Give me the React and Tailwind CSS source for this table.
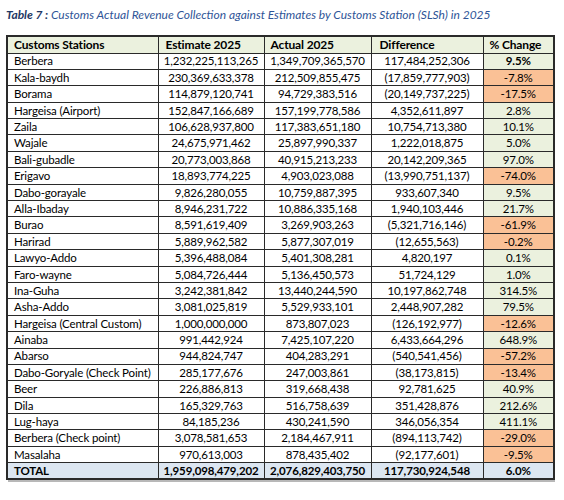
import React from "react";

const rows = [
  ["Berbera", "1,232,225,113,265", "1,349,709,365,570", "117,484,252,306", "9.5%", "g", true],
  ["Kala-baydh", "230,369,633,378", "212,509,855,475", "(17,859,777,903)", "-7.8%", "o"],
  ["Borama", "114,879,120,741", "94,729,383,516", "(20,149,737,225)", "-17.5%", "o"],
  ["Hargeisa (Airport)", "152,847,166,689", "157,199,778,586", "4,352,611,897", "2.8%", "g"],
  ["Zaila", "106,628,937,800", "117,383,651,180", "10,754,713,380", "10.1%", "g"],
  ["Wajale", "24,675,971,462", "25,897,990,337", "1,222,018,875", "5.0%", "g"],
  ["Bali-gubadle", "20,773,003,868", "40,915,213,233", "20,142,209,365", "97.0%", "g"],
  ["Erigavo", "18,893,774,225", "4,903,023,088", "(13,990,751,137)", "-74.0%", "o"],
  ["Dabo-gorayale", "9,826,280,055", "10,759,887,395", "933,607,340", "9.5%", "g"],
  ["Alla-Ibaday", "8,946,231,722", "10,886,335,168", "1,940,103,446", "21.7%", "g"],
  ["Burao", "8,591,619,409", "3,269,903,263", "(5,321,716,146)", "-61.9%", "o"],
  ["Harirad", "5,889,962,582", "5,877,307,019", "(12,655,563)", "-0.2%", "o"],
  ["Lawyo-Addo", "5,396,488,084", "5,401,308,281", "4,820,197", "0.1%", "g"],
  ["Faro-wayne", "5,084,726,444", "5,136,450,573", "51,724,129", "1.0%", "g"],
  ["Ina-Guha", "3,242,381,842", "13,440,244,590", "10,197,862,748", "314.5%", "g"],
  ["Asha-Addo", "3,081,025,819", "5,529,933,101", "2,448,907,282", "79.5%", "g"],
  ["Hargeisa (Central Custom)", "1,000,000,000", "873,807,023", "(126,192,977)", "-12.6%", "o"],
  ["Ainaba", "991,442,924", "7,425,107,220", "6,433,664,296", "648.9%", "g"],
  ["Abarso", "944,824,747", "404,283,291", "(540,541,456)", "-57.2%", "o"],
  ["Dabo-Goryale (Check Point)", "285,177,676", "247,003,861", "(38,173,815)", "-13.4%", "o"],
  ["Beer", "226,886,813", "319,668,438", "92,781,625", "40.9%", "g"],
  ["Dila", "165,329,763", "516,758,639", "351,428,876", "212.6%", "g"],
  ["Lug-haya", "84,185,236", "430,241,590", "346,056,354", "411.1%", "g"],
  ["Berbera (Check point)", "3,078,581,653", "2,184,467,911", "(894,113,742)", "-29.0%", "o"],
  ["Masalaha", "970,613,003", "878,435,402", "(92,177,601)", "-9.5%", "o"],
];

export default function App() {
  return (
    <div
      className="w-[564px] h-[500px] bg-white pt-[6px] pl-[6px]"
      style={{ fontFamily: "Lato, 'Liberation Sans', sans-serif" }}
    >
      <div className="text-[12px] italic leading-[18px] text-[#2f5597]">
        <span className="font-bold text-[#1f3864]">Table 7 :</span> Customs Actual Revenue Collection against
        Estimates by Customs Station (SLSh) in 2025
      </div>
      <div className="mt-[11px] w-[547px] shadow-[2px_2px_0_#b8b8b8]">
        <table className="table-fixed border-collapse w-[547px] border-2 border-[#2a2a2a] text-[11.5px] text-black tracking-[-0.15px]">
          <colgroup>
            <col className="w-[151px]" />
            <col className="w-[106px]" />
            <col className="w-[107px]" />
            <col className="w-[112px]" />
            <col className="w-[71px]" />
          </colgroup>
          <thead>
            <tr className="h-[17px] bg-[#ebf1de] font-bold text-[12px] leading-none">
              <th className="border border-[#2a2a2a] text-left pl-[6px] font-bold">Customs Stations</th>
              <th className="border border-[#2a2a2a] text-left pl-[7px] font-bold">Estimate 2025</th>
              <th className="border border-[#2a2a2a] text-left pl-[6px] font-bold">Actual 2025</th>
              <th className="border border-[#2a2a2a] text-left pl-[8px] font-bold">Difference</th>
              <th className="border border-[#2a2a2a] text-left pl-[6px] font-bold">% Change</th>
            </tr>
          </thead>
          <tbody>
            {rows.map((r, i) => (
              <tr key={i} className="h-[16.4px] leading-none">
                <td className="border border-[#2a2a2a] pl-[6px] whitespace-nowrap">{r[0]}</td>
                <td className="border border-[#2a2a2a] text-center">{r[1]}</td>
                <td className="border border-[#2a2a2a] text-center">{r[2]}</td>
                <td className="border border-[#2a2a2a] text-center">{r[3]}</td>
                <td
                  className={
                    "border border-[#2a2a2a] text-center " +
                    (r[5] === "o" ? "bg-[#fac196]" : "bg-[#ebf1de]") +
                    (r[6] ? " font-bold" : "")
                  }
                >
                  {r[4]}
                </td>
              </tr>
            ))}
            <tr className="h-[16.4px] leading-none bg-[#dce6f1] font-bold">
              <td className="border border-[#2a2a2a] pl-[6px]">TOTAL</td>
              <td className="border border-[#2a2a2a] text-center">1,959,098,479,202</td>
              <td className="border border-[#2a2a2a] text-center">2,076,829,403,750</td>
              <td className="border border-[#2a2a2a] text-center">117,730,924,548</td>
              <td className="border border-[#2a2a2a] text-center">6.0%</td>
            </tr>
          </tbody>
        </table>
      </div>
    </div>
  );
}
